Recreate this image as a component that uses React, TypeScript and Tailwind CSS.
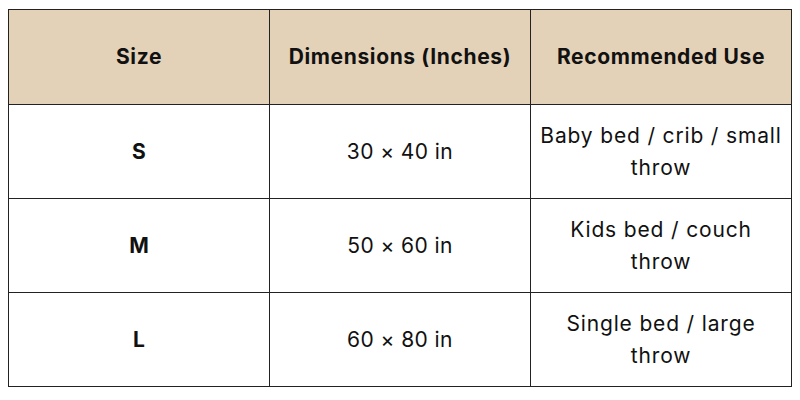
const rows = [
  { size: 'S', dims: '30 × 40 in', use: ['Baby bed / crib / small', 'throw'] },
  { size: 'M', dims: '50 × 60 in', use: ['Kids bed / couch', 'throw'] },
  { size: 'L', dims: '60 × 80 in', use: ['Single bed / large', 'throw'] },
];

export default function App() {
  return (
    <div className="w-[800px] h-[400px] bg-white pt-[9px] pl-[8px]" style={{ fontFamily: 'Inter, sans-serif' }}>
      <table className="w-[784px] border-collapse table-fixed text-[#111] text-[21px]">
        <thead>
          <tr className="bg-[#e4d2b8] h-[95px] tracking-[0.03em]">
            <th className="border border-[#222] font-bold px-1">Size</th>
            <th className="border border-[#222] font-bold px-1">Dimensions (Inches)</th>
            <th className="border border-[#222] font-bold px-1">Recommended Use</th>
          </tr>
        </thead>
        <tbody>
          {rows.map(r => (
            <tr key={r.size} className="h-[94px]">
              <td className="border border-[#222] text-center font-bold px-1">{r.size}</td>
              <td className="border border-[#222] text-center px-1 tracking-[0.02em]">{r.dims}</td>
              <td className="border border-[#222] text-center leading-[32px] px-1 tracking-[0.04em] whitespace-nowrap">
                {r.use.map(line => (
                  <div key={line}>{line}</div>
                ))}
              </td>
            </tr>
          ))}
        </tbody>
      </table>
    </div>
  );
}
